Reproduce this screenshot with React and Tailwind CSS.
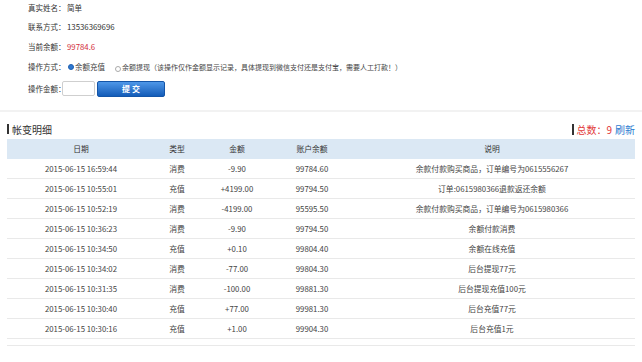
import React from 'react';

const rows = [
  ['2015-06-15 16:59:44', '消费', '-9.90', '99784.60', '余款付款购买商品，订单编号为0615556267'],
  ['2015-06-15 10:55:01', '充值', '+4199.00', '99794.50', '订单:0615980366退款返还余额'],
  ['2015-06-15 10:52:19', '消费', '-4199.00', '95595.50', '余款付款购买商品，订单编号为0615980366'],
  ['2015-06-15 10:36:23', '消费', '-9.90', '99794.50', '余额付款消费'],
  ['2015-06-15 10:34:50', '充值', '+0.10', '99804.40', '余额在线充值'],
  ['2015-06-15 10:34:02', '消费', '-77.00', '99804.30', '后台提现77元'],
  ['2015-06-15 10:31:35', '消费', '-100.00', '99881.30', '后台提现充值100元'],
  ['2015-06-15 10:30:40', '充值', '+77.00', '99981.30', '后台充值77元'],
  ['2015-06-15 10:30:16', '充值', '+1.00', '99904.30', '后台充值1元'],
];

const cols = 'grid grid-cols-[148px_44px_76px_74px_1fr] items-center text-center';

const App = () => {
  return (
    <div className="w-[642px] h-[362px] bg-white overflow-hidden font-['Noto_Sans_CJK_SC',sans-serif] text-[7.5px] text-[#333] whitespace-nowrap">
      {/* account info */}
      <div className="pl-[28px]">
        <div className="h-[16px] flex items-center">
          <span className="w-[39px] shrink-0">真实姓名：</span>
          <span>简单</span>
        </div>
        <div className="mt-[3px] h-[16px] flex items-center">
          <span className="w-[39px] shrink-0">联系方式：</span>
          <span className="text-[7.8px]">13536369696</span>
        </div>
        <div className="mt-[4px] h-[16px] flex items-center">
          <span className="w-[39px] shrink-0">当前余额：</span>
          <span className="text-[#d3303c] text-[7.8px]">99784.6</span>
        </div>
        <div className="mt-[4px] h-[16px] flex items-center">
          <span className="w-[40px] shrink-0">操作方式：</span>
          <span className="w-[6px] h-[6px] rounded-full bg-[#2f78d0] border border-[#1d5fb0] mr-[1px]"></span>
          <span className="text-[#444]">余额充值</span>
          <span className="ml-[10px] mr-[1px] mt-[3px] w-[6px] h-[6px] rounded-full border border-[#aaa] bg-white"></span>
          <span className="text-[#444] text-[7px]">余额提现（该操作仅作金额显示记录，具体提现到微信支付还是支付宝，需要人工打款！）</span>
        </div>
        <div className="mt-[5px] h-[17px] flex items-center">
          <span className="w-[34px] shrink-0">操作金额：</span>
          <span className="w-[33px] h-[15px] border border-[#cfcfcf] rounded-[2px] bg-white"></span>
          <button className="ml-[2px] w-[68px] h-[16px] rounded-[2px] border border-[#1455a8] bg-gradient-to-b from-[#4e97e8] to-[#125cb8] text-white font-bold text-[8px] flex items-center justify-center">
            提 交
          </button>
        </div>
      </div>

      <div className="mt-[13px] h-[2px] bg-[#f2f2f2]"></div>

      {/* title */}
      <div className="mt-[8px] h-[18px] px-[7px] flex items-center justify-between">
        <div className="flex items-center">
          <span className="w-[2px] h-[10px] bg-[#333] mr-[3px]"></span>
          <span className="text-[10px] text-[#333]">帐变明细</span>
        </div>
        <div className="flex items-center text-[10px]">
          <span className="w-[2px] h-[11px] bg-[#333] mr-[2px]"></span>
          <span className="text-[#e23a3a]">总数：9</span>
          <span className="ml-[3px] text-[#2b7bd0]">刷新</span>
        </div>
      </div>

      {/* table */}
      <div className="mt-[1px] mx-[7px] text-[7.8px]">
        <div className={`${cols} h-[20px] bg-[#dbe8f4] text-[#333]`}>
          <span>日期</span>
          <span>类型</span>
          <span>金额</span>
          <span>账户余额</span>
          <span>说明</span>
        </div>
        {rows.map((r, i) => (
          <div key={i} className={`${cols} h-[20px] border-b border-[#e9e9e9] text-[#444]`}>
            <span>{r[0]}</span>
            <span>{r[1]}</span>
            <span>{r[2]}</span>
            <span>{r[3]}</span>
            <span>{r[4]}</span>
          </div>
        ))}
        <div className="h-[7px] border-b border-[#e9e9e9]"></div>
      </div>
    </div>
  );
};

export default App;
